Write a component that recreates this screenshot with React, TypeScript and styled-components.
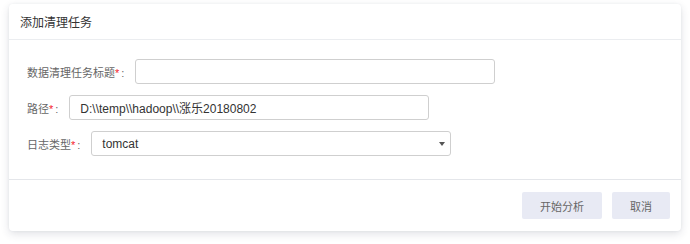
import React, { useState } from "react";
import styled, { createGlobalStyle } from "styled-components";

const GlobalStyle = createGlobalStyle`
  html, body {
    margin: 0;
    padding: 0;
    background: #fff;
  }
  body {
    font-family: "Liberation Sans", "Noto Sans CJK SC", sans-serif;
  }
`;

const Page = styled.div`
  width: 690px;
  height: 244px;
  padding: 4px 9px 0 9px;
  box-sizing: border-box;
`;

const Card = styled.div`
  width: 672px;
  background: #fff;
  border-radius: 4px;
  box-shadow: 0 3px 8px rgba(40, 50, 80, 0.14), 0 0 3px rgba(40, 50, 80, 0.06);
`;

const CardHeader = styled.header`
  height: 35px;
  display: flex;
  align-items: center;
  padding-left: 11px;
  font-size: 12px;
  color: #333;
  border-bottom: 1px solid #ebedf0;
`;

const CardBody = styled.div`
  padding: 19px 18px 23px 18px;
  display: flex;
  flex-direction: column;
  gap: 11px;
  border-bottom: 1px solid #e4e6ea;
`;

const Row = styled.div`
  display: flex;
  align-items: center;
  height: 25px;
`;

const Label = styled.label`
  font-size: 11px;
  color: #666;
  margin-right: 11px;
  white-space: nowrap;
  .star {
    color: #f5222d;
  }
  .colon {
    padding-left: 2px;
  }
`;

const TextInput = styled.input`
  width: 360px;
  height: 25px;
  box-sizing: border-box;
  border: 1px solid #cfcfcf;
  border-radius: 3px;
  padding: 0 10px;
  font-family: inherit;
  font-size: 12px;
  color: #333;
  outline: none;
`;

const SelectBox = styled.div`
  position: relative;
  width: 360px;
  height: 25px;
  select {
    width: 100%;
    height: 100%;
    box-sizing: border-box;
    appearance: none;
    border: 1px solid #cfcfcf;
    border-radius: 3px;
    padding: 0 10px;
    background: #fff;
    font-family: inherit;
    font-size: 12px;
    color: #333;
    outline: none;
  }
  &::after {
    content: "";
    position: absolute;
    right: 6px;
    top: 11px;
    border-left: 3px solid transparent;
    border-right: 3px solid transparent;
    border-top: 4px solid #555;
    pointer-events: none;
  }
`;

const CardFooter = styled.footer`
  display: flex;
  justify-content: flex-end;
  gap: 10px;
  padding: 12px 11px 12px 0;
`;

const Button = styled.button`
  height: 27px;
  padding: 0 18px;
  border: none;
  border-radius: 2px;
  background: #e8eaf4;
  color: #666;
  font-family: inherit;
  font-size: 11px;
  cursor: pointer;
`;

function FieldLabel({ text }: { text: string }) {
  return (
    <Label>
      {text}
      <span className="star">*</span>
      <span className="colon">:</span>
    </Label>
  );
}

function App(): JSX.Element {
  const [title, setTitle] = useState("");
  const [path, setPath] = useState("D:\\\\temp\\\\hadoop\\\\涨乐20180802");
  const [logType, setLogType] = useState("tomcat");

  return (
    <Page>
      <GlobalStyle />
      <Card>
        <CardHeader>添加清理任务</CardHeader>
        <CardBody>
          <Row>
            <FieldLabel text="数据清理任务标题" />
            <TextInput value={title} onChange={(e) => setTitle(e.target.value)} />
          </Row>
          <Row>
            <FieldLabel text="路径" />
            <TextInput value={path} onChange={(e) => setPath(e.target.value)} />
          </Row>
          <Row>
            <FieldLabel text="日志类型" />
            <SelectBox>
              <select value={logType} onChange={(e) => setLogType(e.target.value)}>
                <option value="tomcat">tomcat</option>
                <option value="nginx">nginx</option>
              </select>
            </SelectBox>
          </Row>
        </CardBody>
        <CardFooter>
          <Button>开始分析</Button>
          <Button>取消</Button>
        </CardFooter>
      </Card>
    </Page>
  );
}

export default App;
